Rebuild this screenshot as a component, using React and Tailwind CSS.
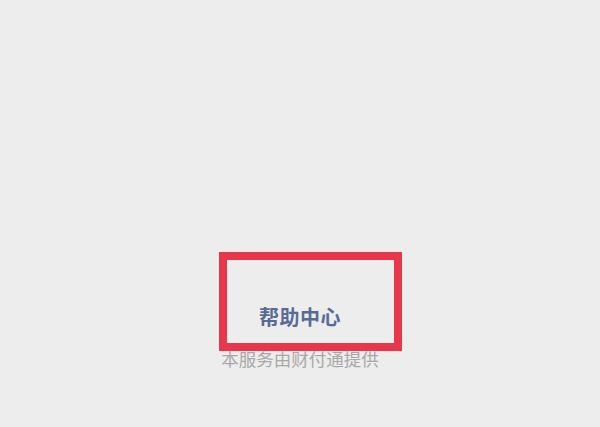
import React from "react";

const App = () => {
  return (
    <div
      className="relative w-[600px] h-[427px] bg-[#ededed] flex flex-col items-center overflow-hidden"
      style={{ fontFamily: '"Noto Sans CJK SC", "Noto Sans", sans-serif' }}
    >
      <div className="flex-1" />
      <a className="text-[20px] leading-[20px] font-bold text-[#576b95] tracking-[0.5px]">
        帮助中心
      </a>
      <p className="mt-[23px] mb-[60px] text-[17.5px] leading-[17.5px] text-[#a8a8a8]">
        本服务由财付通提供
      </p>

      {/* highlight frame drawn on top of the screenshot */}
      <div className="absolute left-[219px] top-[252px] w-[183px] h-[99px] border-[8px] border-[#e8364a]" />
    </div>
  );
};

export default App;
